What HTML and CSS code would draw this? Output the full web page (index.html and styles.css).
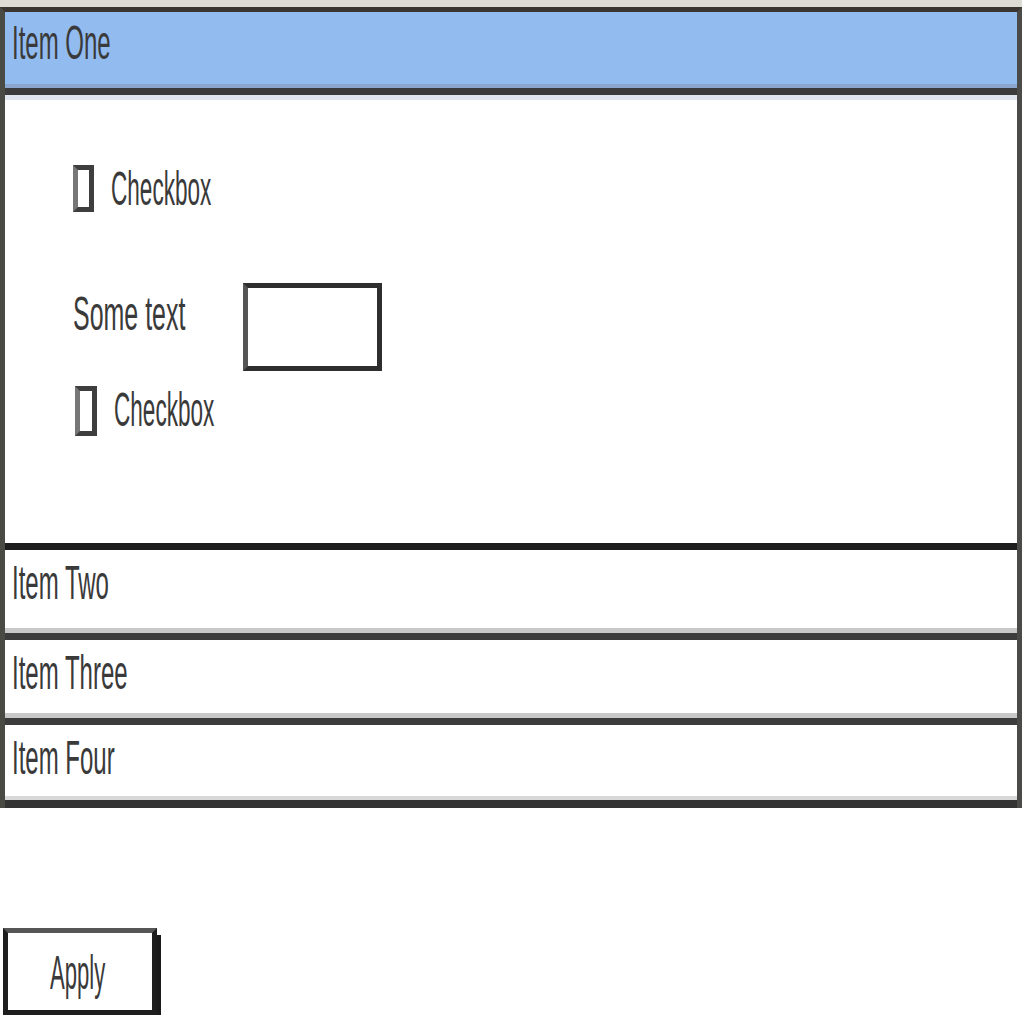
FILE: index.html
```html
<!DOCTYPE html>
<html lang="en">

<head>
    <meta charset="UTF-8">
    <meta name="viewport" content="width=device-width, initial-scale=1.0">
    <title>Accordion</title>
    <link rel="stylesheet" href="styles.css">
</head>

<body>
    <div class="accordion">
        <!-- ITEM ONE (aberto) -->
        <div class="header active"><span class="lbl">Item One</span></div>
        <div class="panel">
            <div class="row">
                <span class="checkbox"></span>
                <span class="lbl">Checkbox</span>
            </div>
            <div class="row field">
                <span class="lbl">Some text</span>
                <span class="textbox"></span>
            </div>
            <div class="row second">
                <span class="checkbox"></span>
                <span class="lbl">Checkbox</span>
            </div>
        </div>

        <!-- ITENS FECHADOS -->
        <div class="header"><span class="lbl">Item Two</span></div>
        <div class="header"><span class="lbl">Item Three</span></div>
        <div class="header last"><span class="lbl">Item Four</span></div>
    </div>

    <div class="button"><span class="lbl">Apply</span></div>
</body>

</html>
```

FILE: styles.css
```css
body {
    margin: 0;
    background: #fff;
    font-family: "Liberation Sans", Arial, sans-serif;
    color: #3a3a3a;
}

.lbl {
    display: inline-block;
    font-size: 48px;
    line-height: 48px;
    transform: scaleX(0.5);
    transform-origin: left top;
    white-space: nowrap;
}

.accordion {
    width: 1012px;
    margin-top: 7px;
    border-left: 5px solid #4a4a44;
    border-right: 5px solid #4a4a48;
    border-top: 5px solid #3a3530;
    box-shadow: 0 -7px 0 #dcdcd4;
}

.header {
    height: 90px;
    padding: 9px 0 0 7px;
    box-sizing: border-box;
    background: #fff;
    border-bottom: 7px solid #3c3c3c;
    box-shadow: inset 0 -5px 0 #c8c8c8;
}

.header.active {
    height: 83px;
    background: #92bbf0;
    padding-top: 7px;
    box-shadow: inset 0 -4px 0 #8aa6cc;
}

.header + .header {
    height: 85px;
}

.header.last {
    height: 83px;
    border-bottom-width: 8px;
    border-bottom-color: #333;
    box-shadow: inset 0 -4px 0 #d8d8d8;
}

.panel {
    height: 455px;
    box-sizing: border-box;
    padding: 65px 0 0 68px;
    border-top: 5px solid #dfe6ef;
    border-bottom: 7px solid #1e1e1e;
    display: flex;
    flex-direction: column;
}

.row {
    display: flex;
    align-items: flex-start;
}

.row .checkbox + .lbl {
    transform: scaleX(0.47);
}

.checkbox {
    width: 21px;
    height: 47px;
    box-sizing: border-box;
    border: 5px solid #3e3e3e;
    border-left-color: #777;
    margin-right: 17px;
}

.row.field {
    margin-top: 70px;
    display: grid;
    grid-template-columns: 170px 139px;
}

.row.field .lbl {
    margin-top: 7px;
    transform: scaleX(0.52);
}

.textbox {
    height: 88px;
    box-sizing: border-box;
    border: 5px solid #2e2e2e;
    border-left-color: #555;
}

.row.second {
    margin-top: 15px;
    padding-left: 2px;
}

.row.second .checkbox {
    width: 22px;
    height: 50px;
}

.button {
    width: 154px;
    height: 87px;
    margin: 120px 0 0 3px;
    box-sizing: border-box;
    border: 5px solid #1e1e1e;
    border-top-color: #555;
    box-shadow: 4px 7px 0 #1a1a1a;
    display: flex;
    padding: 16px 0 0 42px;
}

.button .lbl {
    transform: scaleX(0.46);
}
```
